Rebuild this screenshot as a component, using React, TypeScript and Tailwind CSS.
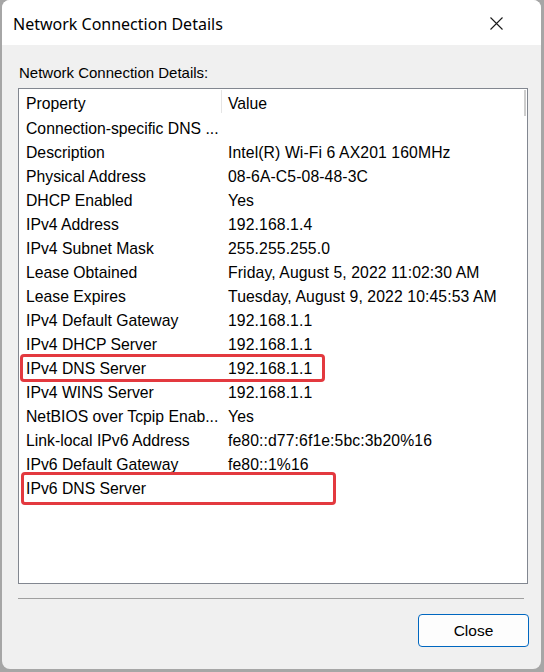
import React from 'react'

const rows: [string, string][] = [
    ['Connection-specific DNS ...', ''],
    ['Description', 'Intel(R) Wi-Fi 6 AX201 160MHz'],
    ['Physical Address', '08-6A-C5-08-48-3C'],
    ['DHCP Enabled', 'Yes'],
    ['IPv4 Address', '192.168.1.4'],
    ['IPv4 Subnet Mask', '255.255.255.0'],
    ['Lease Obtained', 'Friday, August 5, 2022 11:02:30 AM'],
    ['Lease Expires', 'Tuesday, August 9, 2022 10:45:53 AM'],
    ['IPv4 Default Gateway', '192.168.1.1'],
    ['IPv4 DHCP Server', '192.168.1.1'],
    ['IPv4 DNS Server', '192.168.1.1'],
    ['IPv4 WINS Server', '192.168.1.1'],
    ['NetBIOS over Tcpip Enab...', 'Yes'],
    ['Link-local IPv6 Address', 'fe80::d77:6f1e:5bc:3b20%16'],
    ['IPv6 Default Gateway', 'fe80::1%16'],
    ['IPv6 DNS Server', ''],
]

export default function App() {
    return (
        <div className="relative w-[544px] h-[672px] bg-[#a6a6a6] overflow-hidden font-['Liberation_Sans',Arial,sans-serif] text-[15px] text-black">
            <div className="ml-[2px] w-[539px] h-[669px] bg-[#f0f0f0] rounded-lg overflow-hidden flex flex-col">
                {/* title bar */}
                <div className="h-[45px] bg-white flex items-center justify-between pl-[11px] pr-[38px] shrink-0">
                    <span className="font-['Noto_Sans',sans-serif] text-[16px] leading-none pt-[3px]">Network Connection Details</span>
                    <svg width="13" height="13" viewBox="0 0 13 13" className="mt-[1px]">
                        <path d="M0.5 0.5 L12.5 12.5 M12.5 0.5 L0.5 12.5" stroke="#1a1a1a" strokeWidth="1.1" fill="none" />
                    </svg>
                </div>

                {/* body */}
                <div className="flex flex-col pl-[16px] pr-[12px] pt-[18px]">
                    <div className="h-[20px] leading-[20px] pl-[1px]">Network Connection Details:</div>

                    <div className="relative mt-[5px] w-[510px] h-[496px] bg-white border border-[#828790] text-[15.75px]">
                        <div className="absolute right-[1px] top-[1px] w-[2px] h-[26px] bg-[#cdcdcd]" />
                        <div className="mt-[2px] h-[26px] flex">
                            <div className="w-[202px] pl-[7px] h-[25px] flex items-center pt-[1px]">Property</div>
                            <div className="w-px h-[23px] bg-[#e5e5e5] -mt-[1px]" />
                            <div className="pl-[6px] h-[25px] flex items-center pt-[1px]">Value</div>
                        </div>
                        {rows.map(([k, v]) => (
                            <div key={k} className="h-[24px] flex items-center whitespace-nowrap">
                                <div className="w-[203px] pl-[7px]">{k}</div>
                                <div className="pl-[6px] tracking-[0.1px]">{v}</div>
                            </div>
                        ))}
                    </div>

                    <div className="mt-[14px] w-[506px] h-px bg-[#a0a0a0]" />

                    <div className="flex justify-end mt-[15px]">
                        <button className="w-[111px] h-[33px] border border-[#0067c0] rounded-[4px] bg-[#fdfdfd] flex items-center justify-center text-[15.5px]">
                            Close
                        </button>
                    </div>
                </div>
            </div>

            {/* annotation boxes */}
            <div className="absolute left-[20px] top-[354px] w-[305px] h-[28px] border-[3px] border-[#e3393f] rounded-[4px]" />
            <div className="absolute left-[21px] top-[472px] w-[315px] h-[33px] border-[3px] border-[#e3393f] rounded-[4px]" />
        </div>
    )
}
